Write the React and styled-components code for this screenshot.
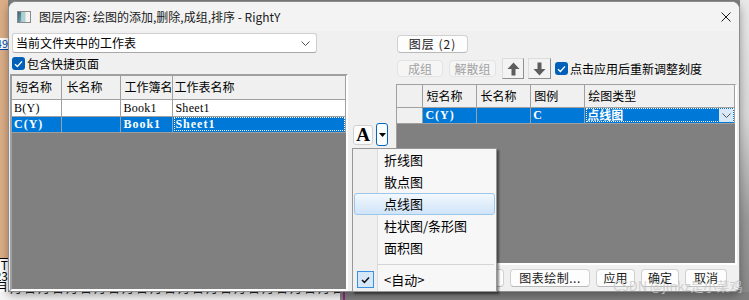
import React from 'react';
import styled, { createGlobalStyle } from 'styled-components';

const Global = createGlobalStyle`
  html, body { margin: 0; padding: 0; background: #808080; }
  body { font-family: "Noto Sans CJK SC", "Noto Sans", sans-serif; font-size: 12px; color: #000; }
  * { box-sizing: border-box; }
`;

const UI = `"Noto Sans CJK SC", "Noto Sans", sans-serif`;
const CELLFONT = `"Liberation Serif", "Noto Sans CJK SC", serif`;

const Screen = styled.div`
  position: relative;
  width: 749px;
  height: 300px;
  overflow: hidden;
  background: #808080;
`;

/* ---------- backdrop (the application behind the dialog) ---------- */
const Backdrop = styled.div`
  position: absolute;
  inset: 0;
  display: flex;
  flex-direction: column;
`;
const BackUpper = styled.div`
  height: 292px;
  display: flex;
`;
const LeftStrip = styled.div`
  width: 8px;
  display: flex;
  flex-direction: column;
  overflow: hidden;
`;
const Peach = styled.div`
  background: #dcae87;
  height: ${p => p.$h ? p.$h + 'px' : 'auto'};
  flex: ${p => p.$h ? 'none' : 1};
`;
const LinkCell = styled.div`
  height: 12px;
  background: #fff;
  display: flex;
  justify-content: flex-end;
  font-size: 11px;
  line-height: 11px;
  color: #0645ad;
  text-decoration: underline;
  white-space: nowrap;
`;
const SheetCells = styled.div`
  height: 34px;
  background: #fff;
  display: flex;
  flex-direction: column;
  align-items: flex-end;
  border-top: 1px solid #000;
`;
const SheetLine = styled.div`
  height: 11px;
  font-size: 12px;
  line-height: 11px;
  white-space: nowrap;
`;
const Under = styled.div`
  flex: 1;
  background: #808080;
`;
const RightStrip = styled.div`
  width: 9px;
  background: linear-gradient(#e9e9e9 0%, #d8d8d8 40%, #9a9a9a 75%, #8a8a8a 100%);
`;
const BackLower = styled.div`
  height: 8px;
  display: flex;
`;
const BottomLeft = styled.div`
  width: 340px;
  background: #f4f4f4;
  overflow: hidden;
  white-space: nowrap;
  font-size: 12px;
  line-height: 14px;
  color: #222;
  letter-spacing: 2px;
`;
const TextTops = styled.div`
  margin-top: -11px;
  padding-left: 10px;
`;
const Magenta = styled.div`
  width: 2px;
  margin-left: 3px;
  background: #8e2a7e;
`;
const BottomRight = styled.div`
  flex: 1;
  background: #7f7f7f;
`;

/* ---------- dialog ---------- */
const Dialog = styled.div`
  position: absolute;
  left: 8px;
  top: 1px;
  width: 732px;
  height: 291px;
  border: 1px solid #8c8c8c;
  border-radius: 8px 8px 6px 3px;
  background: #f0f0f0;
  box-shadow: 0 3px 10px rgba(0, 0, 0, 0.35);
  display: flex;
  flex-direction: column;
  overflow: hidden;
`;
const TitleBar = styled.div`
  height: 29px;
  flex: none;
  display: flex;
  align-items: center;
  padding: 0 8px;
  background: #f3f3f3;
  font-family: ${UI};
  font-size: 12px;
`;
const TitleText = styled.div`
  margin-left: 8px;
  flex: 1;
  line-height: 14px;
  color: #1a1a1a;
`;
const Body = styled.div`
  flex: 1;
  display: flex;
  padding-left: 1px;
  min-height: 0;
`;

/* left column */
const LeftCol = styled.div`
  width: 338px;
  display: flex;
  flex-direction: column;
`;
const Combo = styled.div`
  margin: 2px 0 0 2px;
  width: 305px;
  height: 20px;
  background: #fff;
  border: 1px solid #cfcfcf;
  border-bottom-color: #a8a8a8;
  border-radius: 3px;
  display: flex;
  align-items: center;
  padding: 0 6px 0 3px;
  font-size: 12px;
  line-height: 14px;
`;
const ComboText = styled.span`
  flex: 1;
`;
const CheckRow = styled.label`
  display: flex;
  align-items: center;
  height: 17px;
  margin: ${p => p.$m || '2px 0 0 2px'};
  gap: 2px;
  font-size: 12px;
  line-height: 14px;
  white-space: nowrap;
`;
const CheckBox = styled.span`
  width: 13px;
  height: 13px;
  border-radius: 3px;
  background: #005fb8;
  display: inline-flex;
  align-items: center;
  justify-content: center;
  flex: none;
`;
const SunkenFrame = styled.div`
  background: #808080;
  border-style: solid;
  border-width: ${p => p.$bw || '2px'};
  border-color: #a0a0a0 #ffffff #ffffff #a0a0a0;
  overflow: hidden;
  flex: ${p => p.$grow ? 1 : 'none'};
  height: ${p => p.$h ? p.$h + 'px' : 'auto'};
  margin-top: ${p => p.$mt || 0}px;
`;
const Grid = styled.table`
  border-collapse: collapse;
  table-layout: fixed;
  font-size: 12px;
`;
const HeadCell = styled.th`
  width: ${p => p.$w}px;
  height: ${p => p.$h || 22}px;
  background: #f0f0f0;
  border: 1px solid #a0a0a0;
  border-top: none;
  text-align: left;
  font-weight: normal;
  font-family: ${UI};
  padding: 0 0 0 ${p => p.$pl ?? 3}px;
  line-height: 14px;
  white-space: nowrap;
  overflow: hidden;
  &:first-child { border-left: none; }
`;
const Cell = styled.td`
  height: ${p => p.$h || 16}px;
  background: ${p => p.$sel ? '#0078d7' : p.$row ? '#f0f0f0' : '#fff'};
  color: ${p => p.$sel ? '#fff' : '#000'};
  font-family: ${CELLFONT};
  font-weight: ${p => p.$sel ? 'bold' : 'normal'};
  font-size: 12px;
  letter-spacing: ${p => p.$sel ? '1px' : '0.3px'};
  border: 1px solid #a0a0a0;
  padding: 0 0 0 2px;
  line-height: 12px;
  white-space: nowrap;
  overflow: hidden;
  position: relative;
  outline: ${p => p.$focus ? '1px dotted #fff' : 'none'};
  outline-offset: -2px;
  &:first-child { border-left: none; }
`;
const CellCJK = styled.span`
  font-family: ${UI};
  letter-spacing: 0;
  font-weight: bold;
`;
const CellDrop = styled.span`
  position: absolute;
  right: 1px;
  top: 1px;
  bottom: 1px;
  width: 14px;
  background: #d9e8f6;
  display: flex;
  align-items: center;
  justify-content: center;
`;

/* middle column */
const MidCol = styled.div`
  width: 48px;
  display: flex;
  align-items: flex-start;
  padding: 92px 0 0 5px;
  gap: 3px;
`;
const FontBtn = styled.div`
  margin-top: 2px;
  width: 20px;
  height: 20px;
  border: 1px solid #d0d0d0;
  border-radius: 3px;
  background: #fcfcfc;
  display: flex;
  align-items: center;
  justify-content: center;
  font-family: "Liberation Serif", serif;
  font-weight: bold;
  font-size: 19px;
  line-height: 18px;
`;
const DropBtn = styled.div`
  width: 12px;
  height: 23px;
  border: 1px solid #0067c0;
  border-radius: 3px;
  background: #fcfcfc;
  display: flex;
  align-items: center;
  justify-content: center;
`;

/* right column */
const RightCol = styled.div`
  width: 341px;
  display: flex;
  flex-direction: column;
`;
const Btn = styled.div`
  height: ${p => p.$h || 18}px;
  width: ${p => p.$w}px;
  flex: none;
  margin: ${p => p.$m || 0};
  border: 1px solid ${p => p.$disabled ? '#e3e3e3' : '#d0d0d0'};
  border-bottom-color: ${p => p.$disabled ? '#e3e3e3' : '#b9b9b9'};
  border-radius: 4px;
  background: ${p => p.$disabled ? '#f5f5f5' : '#fdfdfd'};
  color: ${p => p.$disabled ? '#a2a2a2' : '#1a1a1a'};
  display: flex;
  align-items: center;
  justify-content: center;
  font-size: 12px;
  line-height: 14px;
  white-space: nowrap;
  letter-spacing: ${p => p.$ls || 0}px;
`;
const Toolbar = styled.div`
  display: flex;
  align-items: center;
  height: 21px;
  margin: 5px 0 0 1px;
`;
const ArrowBtn = styled.div`
  width: ${p => p.$w}px;
  height: 21px;
  margin-left: ${p => p.$ml}px;
  background: #f3f3f3;
  border: 1px solid #adadad;
  border-color: #dcdcdc #8f8f8f #8f8f8f #dcdcdc;
  display: flex;
  align-items: center;
  justify-content: center;
`;
const BtnRow = styled.div`
  display: flex;
  justify-content: flex-end;
  gap: 6px;
  margin-top: 4px;
  padding-right: 10px;
`;
const Watermark = styled.div`
  position: absolute;
  left: 613px;
  top: 279px;
  font-size: 13px;
  line-height: 14px;
  color: rgba(200, 200, 200, 0.85);
  font-family: ${UI};
  white-space: nowrap;
  pointer-events: none;
`;

/* popup menu */
const Menu = styled.div`
  position: absolute;
  left: 352px;
  top: 148px;
  width: 145px;
  height: 144px;
  background: #f7f7f7;
  border: 1px solid #979797;
  box-shadow: 2px 2px 2px rgba(0, 0, 0, 0.45);
  display: flex;
  flex-direction: column;
  font-size: 13px;
  font-family: ${UI};
  &::before {
    content: "";
    position: absolute;
    left: 0;
    top: 0;
    bottom: 0;
    width: 24px;
    background: #efefef;
    border-right: 1px solid #dcdcdc;
  }
`;
const MenuItem = styled.div`
  position: relative;
  height: 22px;
  flex: none;
  display: flex;
  align-items: center;
  padding-left: 29px;
  line-height: 14px;
  margin: 0 1px;
  border: 1px solid ${p => p.$hot ? '#9cc6ea' : 'transparent'};
  border-radius: 3px;
  background: ${p => p.$hot ? 'linear-gradient(#f3f8fd, #cfe4f8)' : 'transparent'};
`;
const MenuSep = styled.div`
  position: relative;
  height: 10px;
  flex: none;
  margin-left: 24px;
  display: flex;
  align-items: center;
  &::after {
    content: "";
    flex: 1;
    height: 1px;
    background: #d4d4d4;
    margin-right: 2px;
  }
`;
const MenuCheck = styled.span`
  position: absolute;
  left: 2px;
  top: 1px;
  width: 17px;
  height: 17px;
  border: 1px solid #3c8fe0;
  background: #d5e8fa;
  display: flex;
  align-items: center;
  justify-content: center;
`;

const Check = () => (
  <svg width="9" height="8" viewBox="0 0 9 8"><path d="M1 4.2 L3.4 6.4 L8 1.4" fill="none" stroke="#fff" strokeWidth="1.4" /></svg>
);

const TitleIcon = () => (
  <svg width="14" height="14" viewBox="0 0 14 14">
    <defs>
      <linearGradient id="ti" x1="0" y1="0" x2="1" y2="1">
        <stop offset="0" stopColor="#2f5f78" />
        <stop offset="1" stopColor="#7fb0b8" />
      </linearGradient>
    </defs>
    <rect x="0.5" y="1.5" width="13" height="11" fill="#f4f4f4" stroke="#8a8a8a" />
    <rect x="1" y="2" width="3.5" height="10" fill="url(#ti)" />
    <rect x="4.5" y="2" width="4" height="10" fill="#9cc7c4" opacity="0.8" />
  </svg>
);

const CloseX = () => (
  <svg width="10" height="10" viewBox="0 0 10 10"><path d="M0.5 0.5 L9.5 9.5 M9.5 0.5 L0.5 9.5" stroke="#1b1b1b" strokeWidth="1" /></svg>
);

const Chevron = ({ color = '#444' }) => (
  <svg width="9" height="5" viewBox="0 0 9 5"><path d="M0.5 0.5 L4.5 4.5 L8.5 0.5" fill="none" stroke={color} strokeWidth="1" /></svg>
);

const Arrow = ({ down }) => (
  <svg width="13" height="14" viewBox="0 0 13 14" style={down ? { transform: 'rotate(180deg)' } : undefined}>
    <path d="M6.5 0.5 L12.5 7 L8.5 7 L8.5 13.5 L4.5 13.5 L4.5 7 L0.5 7 Z" fill="#5d5d5d" />
  </svg>
);

const Tri = () => (
  <svg width="7" height="4" viewBox="0 0 7 4"><path d="M0 0 L7 0 L3.5 4 Z" fill="#000" /></svg>
);

const MenuTick = () => (
  <svg width="9" height="8" viewBox="0 0 9 8"><path d="M1 4 L3.4 6.4 L8 1.4" fill="none" stroke="#111" strokeWidth="1.5" /></svg>
);

export default function App() {
  return (
    <Screen>
      <Global />
      <Backdrop>
        <BackUpper>
          <LeftStrip>
            <Peach $h={38} />
            <LinkCell>49</LinkCell>
            <Peach />
            <SheetCells>
              <SheetLine>T</SheetLine>
              <SheetLine>23</SheetLine>
              <SheetLine>月</SheetLine>
            </SheetCells>
          </LeftStrip>
          <Under />
          <RightStrip />
        </BackUpper>
        <BackLower>
          <BottomLeft>
            <TextTops>月日月日月日月日月日月日月日月日月日月日月日月日月日月日</TextTops>
          </BottomLeft>
          <Magenta />
          <BottomRight />
        </BackLower>
      </Backdrop>

      <Dialog>
        <TitleBar>
          <TitleIcon />
          <TitleText>图层内容: 绘图的添加,删除,成组,排序 - RightY</TitleText>
          <CloseX />
        </TitleBar>
        <Body>
          <LeftCol>
            <Combo>
              <ComboText>当前文件夹中的工作表</ComboText>
              <Chevron color="#555" />
            </Combo>
            <CheckRow>
              <CheckBox><Check /></CheckBox>
              包含快捷页面
            </CheckRow>
            <SunkenFrame $grow $mt={2}>
              <Grid>
                <thead>
                  <tr>
                    <HeadCell $w={50} $pl={4} $h={23}>短名称</HeadCell>
                    <HeadCell $w={59} $pl={4} $h={23}>长名称</HeadCell>
                    <HeadCell $w={51} $pl={3} $h={23}>工作簿名</HeadCell>
                    <HeadCell $w={173} $pl={1} $h={23}>工作表名称</HeadCell>
                  </tr>
                </thead>
                <tbody>
                  <tr>
                    <Cell $h={17}>B(Y)</Cell>
                    <Cell $h={17}></Cell>
                    <Cell $h={17}>Book1</Cell>
                    <Cell $h={17}>Sheet1</Cell>
                  </tr>
                  <tr>
                    <Cell $sel>C(Y)</Cell>
                    <Cell $sel></Cell>
                    <Cell $sel>Book1</Cell>
                    <Cell $sel $focus>Sheet1</Cell>
                  </tr>
                </tbody>
              </Grid>
            </SunkenFrame>
          </LeftCol>

          <MidCol>
            <FontBtn>A</FontBtn>
            <DropBtn><Tri /></DropBtn>
          </MidCol>

          <RightCol>
            <Btn $w={71} $m="4px 0 0 1px" $ls={1}>图层 (2)</Btn>
            <Toolbar>
              <Btn $w={46} $h={17} $disabled>成组</Btn>
              <Btn $w={47} $h={17} $disabled $m="0 0 0 6px">解散组</Btn>
              <ArrowBtn $w={22} $ml={6}><Arrow /></ArrowBtn>
              <ArrowBtn $w={23} $ml={4}><Arrow down /></ArrowBtn>
              <CheckRow $m="0 0 0 4px">
                <CheckBox><Check /></CheckBox>
                点击应用后重新调整刻度
              </CheckRow>
            </Toolbar>
            <SunkenFrame $h={181} $mt={5} $bw="1px 2px 2px 1px">
              <Grid>
                <thead>
                  <tr>
                    <HeadCell $w={26} $h={22} $pl={0}></HeadCell>
                    <HeadCell $w={54} $h={22}>短名称</HeadCell>
                    <HeadCell $w={54} $h={22}>长名称</HeadCell>
                    <HeadCell $w={54} $h={22}>图例</HeadCell>
                    <HeadCell $w={150} $h={22}>绘图类型</HeadCell>
                  </tr>
                </thead>
                <tbody>
                  <tr>
                    <Cell $row></Cell>
                    <Cell $sel>C(Y)</Cell>
                    <Cell $sel></Cell>
                    <Cell $sel>C</Cell>
                    <Cell $sel $focus><CellCJK>点线图</CellCJK><CellDrop><Chevron color="#555" /></CellDrop></Cell>
                  </tr>
                </tbody>
              </Grid>
            </SunkenFrame>
            <BtnRow>
              <Btn $w={60}>添加</Btn>
              <Btn $w={80} $ls={0.5}>图表绘制...</Btn>
              <Btn $w={39}>应用</Btn>
              <Btn $w={38}>确定</Btn>
              <Btn $w={42}>取消</Btn>
            </BtnRow>
          </RightCol>
        </Body>
      </Dialog>

      <Menu>
        <MenuItem>折线图</MenuItem>
        <MenuItem>散点图</MenuItem>
        <MenuItem $hot>点线图</MenuItem>
        <MenuItem>柱状图/条形图</MenuItem>
        <MenuItem>面积图</MenuItem>
        <MenuSep />
        <MenuItem><MenuCheck><MenuTick /></MenuCheck>&lt;自动&gt;</MenuItem>
      </Menu>

      <Watermark>CSDN @jinkz是小菜鸡</Watermark>
    </Screen>
  );
}
